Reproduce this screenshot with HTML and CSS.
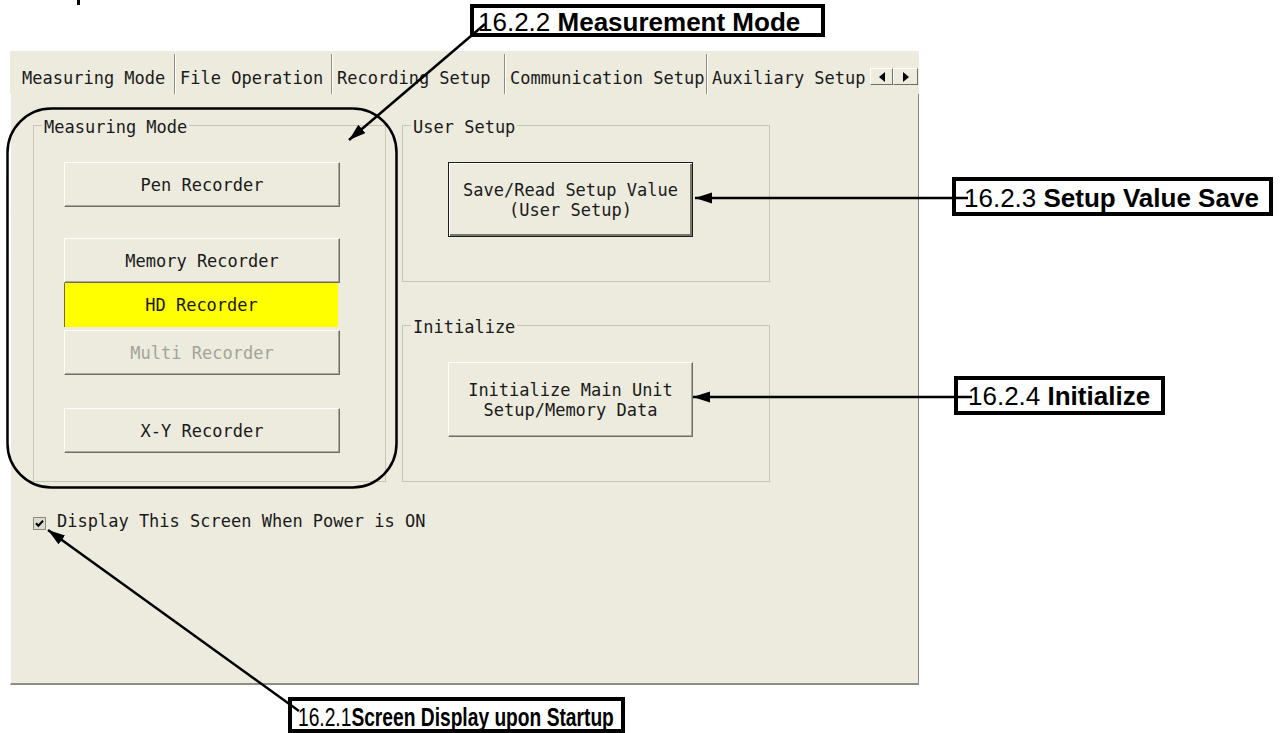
FILE: index.html
```html
<!DOCTYPE html>
<html lang="en">
<head>
    <meta charset="UTF-8">
    <title>Measuring Mode</title>
    <link rel="stylesheet" href="styles.css">
</head>
<body>
<div class="sheet">
    <span class="cut-glyph"></span>

    <div class="dialog">
        <div class="tabs">
            <div class="tab tab-measuring">Measuring Mode</div>
            <div class="tab tab-file">File Operation</div>
            <div class="tab tab-recording">Recording Setup</div>
            <div class="tab tab-comm">Communication Setup</div>
            <div class="tab tab-aux">Auxiliary Setup</div>
            <div class="tab-scroll">
                <span class="scroll-btn scroll-left"><svg width="6" height="10" viewBox="0 0 6 10"><path d="M6 0v10L0 5z"/></svg></span>
                <span class="scroll-btn scroll-right"><svg width="6" height="10" viewBox="0 0 6 10"><path d="M0 0v10l6-5z"/></svg></span>
            </div>
        </div>

        <div class="tab-page">
            <div class="groups">
                <fieldset class="group group-mode">
                    <legend>Measuring Mode</legend>
                    <div class="stack">
                        <button class="btn">Pen Recorder</button>
                        <button class="btn btn-spaced">Memory Recorder</button>
                        <button class="btn btn-selected">HD Recorder</button>
                        <button class="btn btn-disabled" disabled>Multi Recorder</button>
                        <button class="btn btn-far">X-Y Recorder</button>
                    </div>
                </fieldset>

                <div class="side">
                    <fieldset class="group">
                        <legend>User Setup</legend>
                        <button class="btn btn-wide btn-default">Save/Read Setup Value<br>(User Setup)</button>
                    </fieldset>
                    <fieldset class="group">
                        <legend>Initialize</legend>
                        <button class="btn btn-wide">Initialize Main Unit<br>Setup/Memory Data</button>
                    </fieldset>
                </div>
            </div>

            <label class="startup">
                <svg class="check" width="13" height="13" viewBox="0 0 13 13">
                    <rect x="0.5" y="0.5" width="12" height="12" fill="#dcdbd0" stroke="#8b8a80"/>
                    <path d="M3 6.2l2.4 2.6L10 3.8" fill="none" stroke="#000" stroke-width="2"/>
                </svg>
                Display This Screen When Power is ON
            </label>
        </div>
    </div>

    <div class="callout callout-mode">16.2.2 <b>Measurement Mode</b></div>
    <div class="callout callout-save">16.2.3 <b>Setup Value Save</b></div>
    <div class="callout callout-init">16.2.4 <b>Initialize</b></div>
    <div class="callout callout-startup"><span class="squeeze">16.2.1<b>Screen Display upon Startup</b></span></div>

    <svg class="leaders" width="1281" height="733" viewBox="0 0 1281 733">
        <defs>
            <marker id="head" markerUnits="userSpaceOnUse" markerWidth="18" markerHeight="12" refX="17" refY="5.5" orient="auto">
                <path d="M0 0L17 5.5L0 11z" fill="#000"/>
            </marker>
        </defs>
        <rect x="7.5" y="108.5" width="389" height="379" rx="44" fill="none" stroke="#000" stroke-width="2.5"/>
        <g stroke="#000" stroke-width="2.5" fill="none">
            <line x1="485" y1="24" x2="349" y2="140" marker-end="url(#head)"/>
            <line x1="968" y1="198" x2="695" y2="198" marker-end="url(#head)"/>
            <line x1="972" y1="397" x2="693" y2="397" marker-end="url(#head)"/>
            <line x1="299" y1="711" x2="48" y2="530" marker-end="url(#head)"/>
        </g>
    </svg>
</div>
</body>
</html>
```

FILE: styles.css
```css
body {
    margin: 0;
    background: #fff;
}

.sheet {
    position: relative;
    width: 1281px;
    height: 733px;
    overflow: hidden;
    box-sizing: border-box;
    padding: 51px 0 0 10px;
    font-family: "DejaVu Sans Mono", monospace;
    font-size: 17px;
    color: #1a1a1a;
}

.cut-glyph {
    position: absolute;
    left: 77px;
    top: 0;
    width: 3px;
    height: 5px;
    background: #000;
}

/* dialog */

.dialog {
    width: 909px;
    height: 634px;
    background: #ecebde;
    display: flex;
    flex-direction: column;
}

.tabs {
    display: flex;
    height: 43px;
    box-sizing: border-box;
    padding-top: 3px;
}

.tab {
    height: 40px;
    box-sizing: border-box;
    padding: 14px 0 0 4px;
    line-height: 20px;
    white-space: nowrap;
    border-right: 1px solid #8e8d82;
}
.tab + .tab {
    border-left: 1px solid #fff;
}

.tab-measuring { width: 165px; padding-left: 12px; }
.tab-file { width: 157px; }
.tab-recording { width: 173px; }
.tab-comm { width: 202px; }
.tab-aux {
    flex: 1;
    min-width: 0;
    overflow: hidden;
    border-right: 0;
}

.tab-scroll {
    display: flex;
    align-self: flex-start;
    margin: 14px 1px 0 0;
}

.scroll-btn {
    display: grid;
    place-items: center;
    height: 17px;
    box-sizing: border-box;
    border: 1px solid;
    border-color: #fff #6e6e64 #6e6e64 #fff;
}
.scroll-left { width: 23px; }
.scroll-right { width: 25px; }
.scroll-btn svg { display: block; }

.tab-page {
    flex: 1;
    border-left: 1px solid #fff;
    border-right: 1px solid #87867c;
    border-bottom: 2px solid #8f8e84;
    padding: 21px 0 0 22px;
}

.groups {
    display: flex;
    gap: 16px;
    align-items: flex-start;
}

.group {
    margin: 0;
    padding: 26px 0 28px;
    border: 1px solid #c6c5b6;
    box-sizing: border-box;
    min-inline-size: 0;
}
.group legend {
    margin-left: 8px;
    padding: 4px 2px 0;
    line-height: 17px;
}

.group-mode { width: 353px; }

.stack {
    display: flex;
    flex-direction: column;
    align-items: flex-start;
    margin-left: 30px;
}

.side {
    display: flex;
    flex-direction: column;
    gap: 33px;
}
.side .group {
    width: 368px;
    padding-bottom: 44px;
}

/* buttons */

.btn {
    display: block;
    width: 276px;
    height: 45px;
    padding: 0;
    font: inherit;
    line-height: 20px;
    color: #1a1a1a;
    text-align: center;
    background: #ecebde;
    border: 1px solid;
    border-color: #fff #6e6e64 #6e6e64 #fff;
    box-shadow: inset -1px -1px 0 #a9a89c;
}

.btn-spaced { margin-top: 31px; }
.btn-far { margin-top: 33px; }

.btn-selected {
    width: 274px;
    height: 44px;
    background: #ffff00;
    border: 0;
    border-left: 1px solid #6d6d3a;
    box-shadow: none;
}

.btn-disabled {
    margin-top: 3px;
    color: #a4a39a;
}

.btn-wide {
    width: 245px;
    height: 75px;
    margin-left: 45px;
}

.btn-default {
    border-color: #1c1c1c;
    box-shadow: inset 1px 1px 0 #fff, inset -2px -2px 0 #77776c;
}

.startup {
    display: flex;
    align-items: flex-start;
    gap: 11px;
    margin-top: 29px;
    line-height: 20px;
}
.check {
    display: block;
    margin-top: 6px;
}

/* annotations */

.callout {
    position: absolute;
    box-sizing: border-box;
    background: #fff;
    border: 4px solid #000;
    font-family: "Liberation Sans", Arial, sans-serif;
    font-size: 26px;
    line-height: 24px;
    color: #000;
    white-space: nowrap;
}

.callout-mode {
    left: 470px;
    top: 4px;
    width: 355px;
    height: 33px;
    padding: 2px 0 0 4px;
}

.callout-save {
    left: 952px;
    top: 177px;
    width: 321px;
    height: 39px;
    padding: 5px 0 0 8px;
}

.callout-init {
    left: 954px;
    top: 376px;
    width: 211px;
    height: 39px;
    padding: 4px 0 0 10px;
}

.callout-startup {
    left: 288px;
    top: 697px;
    width: 337px;
    height: 36px;
    padding: 3px 0 0 6px;
    font-size: 24px;
}

.squeeze {
    display: inline-block;
    transform-origin: 0 0;
    transform: scale(0.8, 1.1);
}

.leaders {
    position: absolute;
    left: 0;
    top: 0;
}
```
